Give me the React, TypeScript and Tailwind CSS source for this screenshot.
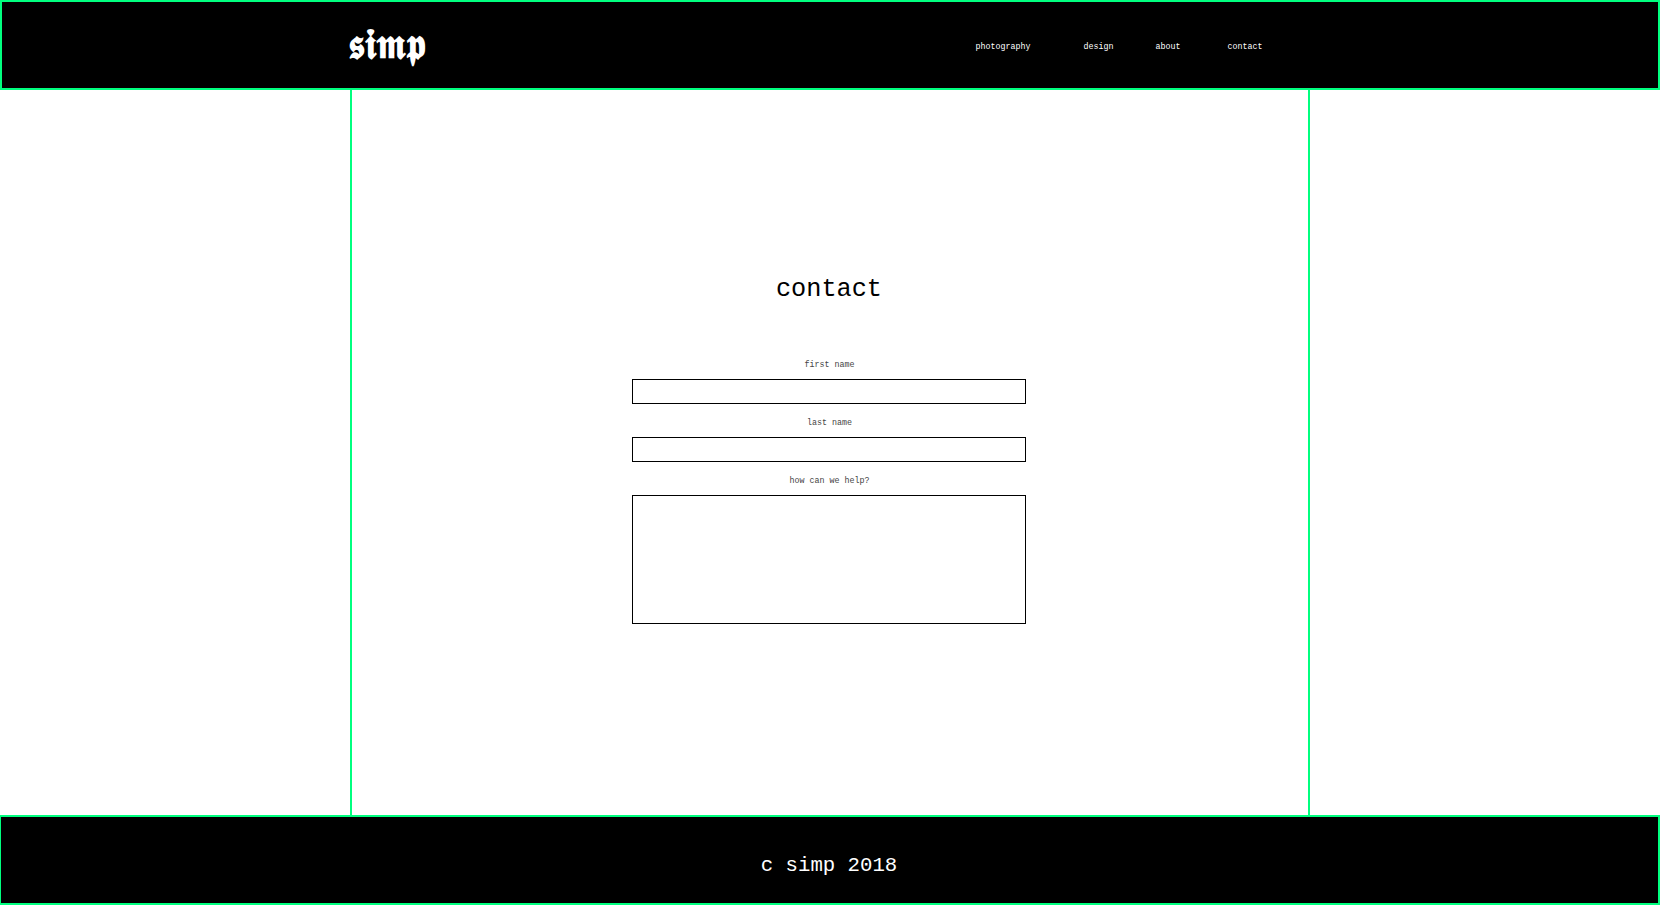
const mono = "font-['Liberation_Mono','Courier_New',monospace]"

const navItems = [
  { label: 'photography', className: 'w-[108px]' },
  { label: 'design', className: 'w-[72px]' },
  { label: 'about', className: 'w-[72px]' },
  { label: 'contact', className: '' },
]

function Field({ label, tall }: { label: string; tall?: boolean }) {
  return (
    <div className="flex flex-col items-center">
      <label className="ml-[1px] h-[11px] text-[8.33px] leading-[11px] text-[#444]">{label}</label>
      {tall ? (
        <textarea className="mt-[8px] block h-[129px] w-[394px] resize-none border border-black bg-white" />
      ) : (
        <input className="mt-[8px] block h-[25px] w-[394px] border border-black bg-white" />
      )}
    </div>
  )
}

export default function App() {
  return (
    <div className={`flex h-[905px] flex-col bg-white ${mono}`}>
      <header className="h-[90px] border-2 border-[#00ff7f] bg-black">
        <div className="mx-auto flex h-full w-[960px] items-center">
          <a className="mb-[3px] ml-[-2px] inline-block scale-y-[1.12] font-['DejaVu_Serif','Liberation_Serif',serif] text-[38px] font-bold text-white">𝖘𝖎𝖒𝖕</a>
          <nav className="mt-[4px] ml-[549.5px] flex text-[8.33px] text-white">
            {navItems.map((item) => (
              <a key={item.label} className={item.className}>
                {item.label}
              </a>
            ))}
          </nav>
        </div>
      </header>

      <main className="mx-auto h-[725px] w-[960px] border-x-2 border-[#00ff7f] pr-[2px]">
        <h1 className="pt-[183px] text-center text-[25.25px] leading-[34px] font-normal text-black">contact</h1>
        <form className="mt-[53px] flex flex-col gap-[14px]">
          <Field label="first name" />
          <Field label="last name" />
          <Field label="how can we help?" tall />
        </form>
      </main>

      <footer className="flex h-[90px] items-center justify-center border-2 border-l border-[#00ff7f] bg-black pt-[12px] pr-[1px] text-[20.7px] text-white">
        c simp 2018
      </footer>
    </div>
  )
}
